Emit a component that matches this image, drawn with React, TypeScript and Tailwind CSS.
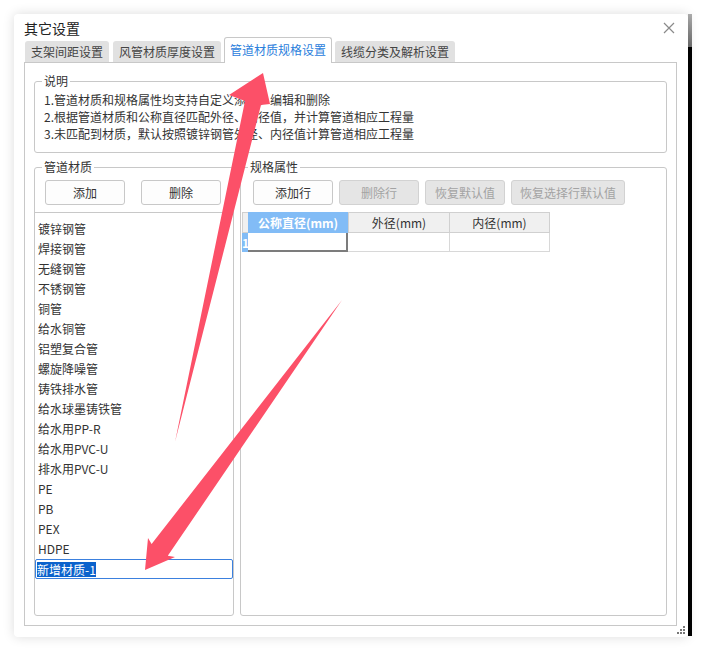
import React from "react";

const materials = [
  "镀锌钢管",
  "焊接钢管",
  "无缝钢管",
  "不锈钢管",
  "铜管",
  "给水铜管",
  "铝塑复合管",
  "螺旋降噪管",
  "铸铁排水管",
  "给水球墨铸铁管",
  "给水用PP-R",
  "给水用PVC-U",
  "排水用PVC-U",
  "PE",
  "PB",
  "PEX",
  "HDPE",
];

function CloseIcon() {
  return (
    <svg width="12" height="12" viewBox="0 0 12 12" className="mr-[2px]">
      <path d="M1 1 L11 11 M11 1 L1 11" stroke="#8a8a8a" strokeWidth="1.2" fill="none" />
    </svg>
  );
}

function Btn({ label, w, disabled }: { label: string; w: string; disabled?: boolean }) {
  return (
    <div
      className={
        disabled
          ? `${w} h-[25px] flex items-center justify-center rounded-[3px] border border-[#d2d2d2] bg-[#e5e5e5] text-[12px] text-[#a3a3a3]`
          : `${w} h-[25px] flex items-center justify-center rounded-[3px] border border-[#c8c8c8] bg-[#fdfdfd] text-[12px] text-[#333]`
      }
    >
      {label}
    </div>
  );
}

export default function App() {
  return (
    <div className="relative w-[706px] h-[650px] bg-white overflow-hidden font-['Noto_Sans_CJK_SC',sans-serif] text-[#333]">
      <div className="flex pt-[14px] pl-[14px]">
        <div className="relative w-[674px] h-[623px] bg-white rounded-[4px] shadow-[0_0_12px_rgba(0,0,0,0.14)] flex flex-col pl-[10px] pr-[11px]">
          {/* title */}
          <div className="h-[23px] pt-[5px] flex items-center justify-between">
            <span className="text-[14px] leading-[18px] text-[#222]">其它设置</span>
            <CloseIcon />
          </div>
          {/* tabs */}
          <div className="h-[25px] flex items-end">
            <div className="ml-[1px] w-[84px] h-[21px] bg-[#e1e1e1] rounded-t-[3px] text-[12px] leading-[21px] text-center text-[#444]">
              支架间距设置
            </div>
            <div className="ml-[4px] w-[108px] h-[21px] bg-[#e1e1e1] rounded-t-[3px] text-[12px] leading-[21px] text-center text-[#444]">
              风管材质厚度设置
            </div>
            <div className="relative z-10 -mb-px ml-[3px] w-[108px] h-[26px] bg-white border-t border-l border-r border-[#c8c8c8] rounded-t-[3px] text-[12px] leading-[24px] text-center text-[#2b80dc]">
              管道材质规格设置
            </div>
            <div className="ml-[3px] w-[120px] h-[21px] bg-[#e1e1e1] rounded-t-[3px] text-[12px] leading-[21px] text-center text-[#444]">
              线缆分类及解析设置
            </div>
          </div>
          {/* panel */}
          <div className="h-[564px] border border-[#c8c8c8] pt-[10px] pl-[9px] pr-[9px] flex flex-col">
            <fieldset className="border border-[#c8c8c8] rounded-[3px] pb-[10px]">
              <legend className="ml-[7px] px-[2px] text-[12px] leading-[16px] text-[#333]">说明</legend>
              <div className="pt-[2px] pl-[9px] text-[12px] leading-[17px] text-[#333]">
                <div>1.管道材质和规格属性均支持自定义添加、编辑和删除</div>
                <div>2.根据管道材质和公称直径匹配外径、内径值，并计算管道相应工程量</div>
                <div>3.未匹配到材质，默认按照镀锌钢管外径、内径值计算管道相应工程量</div>
              </div>
            </fieldset>
            <div className="mt-[6px] flex gap-[6px] h-[457px]">
              {/* left group */}
              <fieldset className="w-[200px] h-full border border-[#c8c8c8] rounded-[3px] flex flex-col min-w-0">
                <legend className="ml-[7px] px-[2px] text-[12px] leading-[16px] text-[#333]">管道材质</legend>
                <div className="pt-[5px] pl-[10px] flex gap-[16px]">
                  <Btn label="添加" w="w-[80px]" />
                  <Btn label="删除" w="w-[80px]" />
                </div>
                <div className="mt-[7px] border-t border-[#c8c8c8] pt-[6px] flex flex-col">
                  {materials.map((m) => (
                    <div key={m} className="h-[20px] leading-[20px] pl-[3px] text-[12px] text-[#333] whitespace-nowrap">
                      {m}
                    </div>
                  ))}
                  <div className="h-[20px] border border-[#3b80de] rounded-[2px] pl-[1px] flex items-center">
                    <span className="bg-[#0b62cc] text-white text-[12px] leading-[15px]">新增材质-1</span>
                  </div>
                </div>
              </fieldset>
              {/* right group */}
              <fieldset className="flex-1 h-full border border-[#c8c8c8] rounded-[3px] flex flex-col min-w-0">
                <legend className="ml-[7px] px-[2px] text-[12px] leading-[16px] text-[#333]">规格属性</legend>
                <div className="pt-[5px] pl-[12px] flex gap-[6px]">
                  <Btn label="添加行" w="w-[80px]" />
                  <Btn label="删除行" w="w-[80px]" disabled />
                  <Btn label="恢复默认值" w="w-[80px]" disabled />
                  <Btn label="恢复选择行默认值" w="w-[114px]" disabled />
                </div>
                <div className="mt-[7px] ml-[1px] flex flex-col text-[12px]">
                  <div className="flex h-[21px]">
                    <div className="w-[6px] bg-[#f0f0f0] border-t border-l border-b border-[#d0d0d0]" />
                    <div className="w-[100px] bg-[#82bcf6] text-white font-bold flex items-center justify-center">
                      公称直径(mm)
                    </div>
                    <div className="w-[101px] bg-[#f0f0f0] border-t border-l border-b border-[#d0d0d0] flex items-center justify-center text-[#333]">
                      外径(mm)
                    </div>
                    <div className="w-[101px] bg-[#f0f0f0] border border-[#d0d0d0] flex items-center justify-center text-[#333]">
                      内径(mm)
                    </div>
                  </div>
                  <div className="flex h-[19px]">
                    <div className="w-[6px] bg-[#82bcf6] overflow-hidden text-white font-bold leading-[19px]">1</div>
                    <div className="w-[100px] bg-white border-r-2 border-b-2 border-[#7c7c7c]" />
                    <div className="w-[101px] bg-white border-b border-[#d8d8d8]" />
                    <div className="w-[101px] bg-white border-l border-r border-b border-[#d8d8d8]" />
                  </div>
                </div>
              </fieldset>
            </div>
          </div>
          {/* resize grip */}
          <svg className="absolute right-[3px] bottom-[3px]" width="8" height="8" viewBox="0 0 8 8">
            <rect x="6" y="0" width="2" height="2" fill="#777" />
            <rect x="3" y="3" width="2" height="2" fill="#777" />
            <rect x="6" y="3" width="2" height="2" fill="#777" />
            <rect x="0" y="6" width="2" height="2" fill="#777" />
            <rect x="3" y="6" width="2" height="2" fill="#777" />
            <rect x="6" y="6" width="2" height="2" fill="#777" />
          </svg>
        </div>
        {/* dark edge bar */}
        <div className="w-[4px] h-[622px] flex flex-col">
          <div className="h-[33px] bg-gradient-to-b from-[#b0b0b0] to-[#6e6e6e]" />
          <div className="flex-1 bg-black" />
        </div>
      </div>
      {/* annotation arrows */}
      <svg className="absolute inset-0 pointer-events-none" width="706" height="650" viewBox="0 0 706 650">
        <polygon
          points="175,442 245,101 229,95 263,73 270,104 261,105"
          fill="#fc5068"
        />
        <polygon
          points="342,300 167.8,555.8 175,557 145,570 148,538 151.6,544"
          fill="#fc5068"
        />
      </svg>
    </div>
  );
}
